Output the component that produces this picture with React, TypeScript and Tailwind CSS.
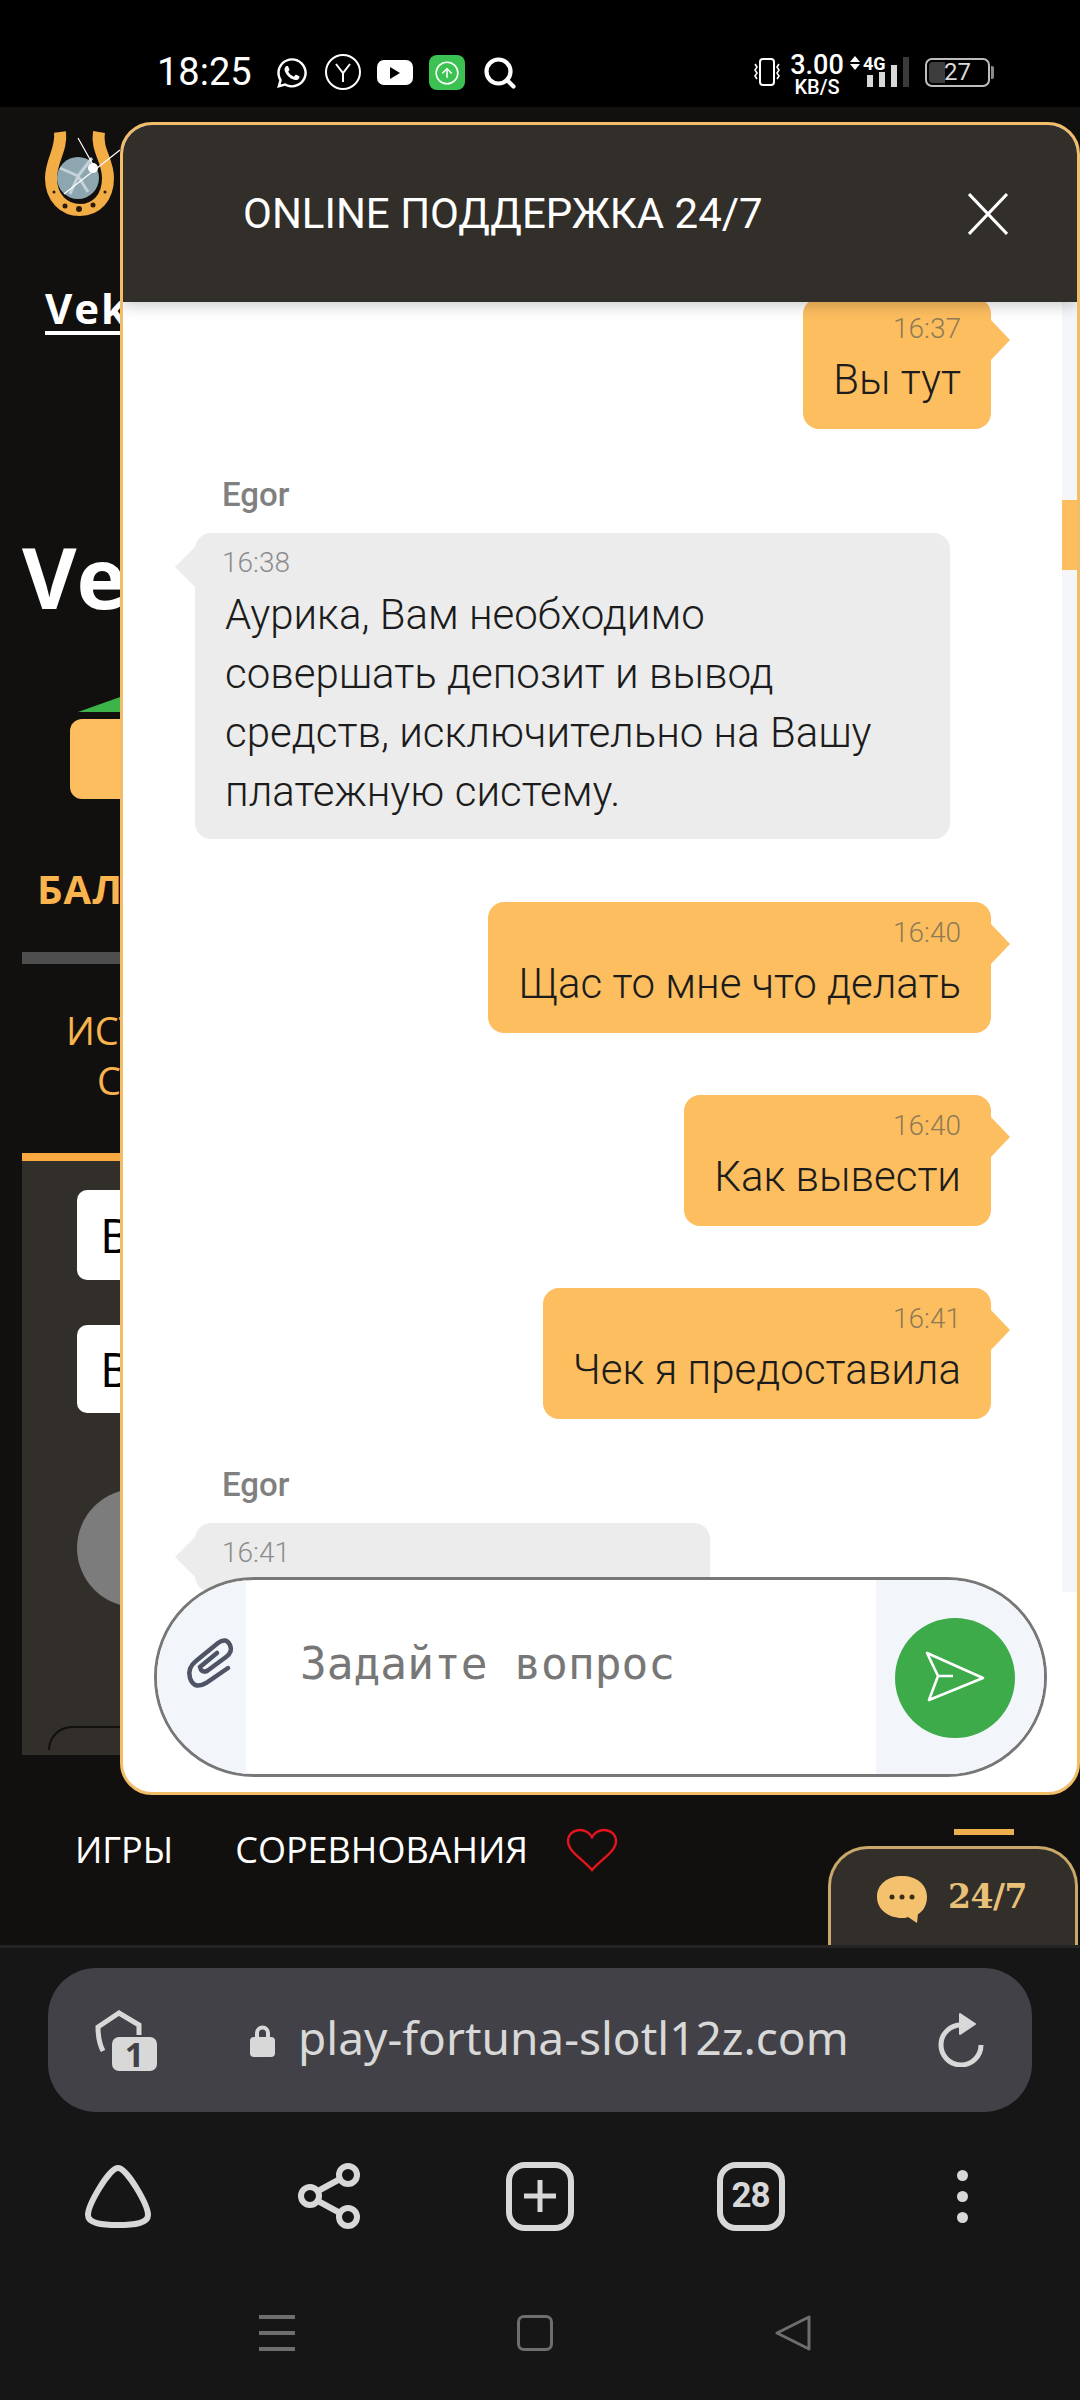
import { Search, CircleArrowUp } from 'lucide-react';
import { FaWhatsapp } from 'react-icons/fa';

function StatusBar() {
  return (
    <div className="h-[107px] bg-black flex items-start pt-[54px] text-white">
      <span className="ml-[157px] w-[118px] text-[38px] leading-[36px]">18:25</span>
      <FaWhatsapp className="mt-[2px] w-[34px] h-[34px]" />
      <div className="ml-[16px] w-[36px] h-[36px] rounded-full border-2 border-white flex items-center justify-center">
        <svg viewBox="0 0 24 24" className="w-[24px] h-[24px]" fill="none" stroke="white" strokeWidth="2">
          <path d="M5 4l7 9 7-9M12 13v9" />
        </svg>
      </div>
      <div className="ml-[16px] mt-[6px] w-[36px] h-[25px] bg-white rounded-[7px] flex items-center justify-center">
        <div className="w-0 h-0 border-y-[6px] border-y-transparent border-l-[10px] border-l-black" />
      </div>
      <div className="ml-[16px] mt-[1px] w-[36px] h-[35px] bg-[#3cc252] rounded-[8px] flex items-center justify-center">
        <CircleArrowUp className="w-[26px] h-[26px]" strokeWidth={1.4} />
      </div>
      <Search className="ml-[17px] mt-[1px] w-[36px] h-[36px]" strokeWidth={2.8} />

      <svg viewBox="0 0 30 28" className="ml-[234px] mt-[4px] w-[30px] h-[28px] shrink-0" fill="none" stroke="white">
        <rect x="8" y="1" width="14" height="26" rx="3" strokeWidth="2" />
        <path d="M3 6l2 3-2 3 2 3-2 3 2 3M27 6l-2 3 2 3-2 3 2 3-2 3" strokeWidth="1.6" />
      </svg>
      <div className="ml-[10px] w-[50px] -mt-[1px] flex flex-col items-center font-medium">
        <span className="text-[27px] leading-[24px]">3.00</span>
        <span className="text-[20px] leading-[20px]">KB/S</span>
      </div>
      <div className="ml-[8px] w-[10px] mt-[2px] flex flex-col gap-[2px] items-center">
        <div className="w-0 h-0 border-x-[5px] border-x-transparent border-b-[6px] border-b-white" />
        <div className="w-0 h-0 border-x-[5px] border-x-transparent border-t-[6px] border-t-white" />
      </div>
      <span className="ml-[3px] w-[22px] mt-[2px] text-[18px] leading-[16px] font-bold whitespace-nowrap">4G</span>
      <div className="-ml-[18px] mt-[3px] h-[30px] flex items-end gap-[6px]">
        <div className="w-[6px] h-[12px] bg-[#d8d8d8]" />
        <div className="w-[6px] h-[15px] bg-[#d8d8d8]" />
        <div className="w-[6px] h-[22px] bg-[#d8d8d8]" />
        <div className="w-[6px] h-[30px] bg-[#3a3a3a]" />
      </div>
      <div className="ml-[16px] mt-[4px] w-[65px] h-[29px] rounded-[7px] border-2 border-[#bdbdbd] p-[2px] relative flex items-center">
        <div className="w-[16px] h-full bg-[#3d3d3d] rounded-l-[4px]" />
        <span className="absolute inset-0 text-center text-[24px] leading-[25px] text-[#d8d8d8]">27</span>
      </div>
      <div className="ml-[1px] mt-[12px] w-[3px] h-[13px] bg-[#8a8a8a] rounded-r-[2px]" />
    </div>
  );
}

function Logo() {
  return (
    <svg viewBox="0 0 100 110" className="ml-[30px] mt-[13px] w-[100px] h-[110px]" fill="none">
      <path d="M30 12C32 30 21 40 21 58C21 78 34 90 50 90C66 90 78 78 78 58C78 40 66 30 69 12" stroke="#f2ad45" strokeWidth="12" />
      <circle cx="48" cy="58" r="21" fill="#8ea6b0" />
      <path d="M30 48l18 8-8 18M48 56l14-18M48 56l10 16" stroke="#c4d3d9" strokeWidth="3" />
      <path d="M34 74L90 30M48 18L66 50" stroke="#fff" strokeWidth="1.2" />
      <circle cx="63" cy="48" r="5" fill="#fff" />
      <circle cx="35" cy="86" r="2.5" fill="#2a1c08" />
      <circle cx="49" cy="89" r="3" fill="#2a1c08" />
      <circle cx="63" cy="85" r="2.5" fill="#2a1c08" />
      <circle cx="24" cy="72" r="1.5" fill="#2a1c08" />
      <circle cx="75" cy="72" r="1.5" fill="#2a1c08" />
    </svg>
  );
}

// what shows of the site behind the chat window
function SitePage() {
  return (
    <div className="flex flex-col font-['Open_Sans',sans-serif] text-white">
      <Logo />
      <span className="ml-[45px] mt-[55px] w-[300px] text-[42px] leading-[46px] font-bold tracking-[2px] border-b-4 border-white">Vek</span>
      <span className="ml-[22px] mt-[192px] text-[84px] leading-[100px] font-bold">Vek</span>
      <div className="ml-[78px] mt-[69px] w-[90px] h-[16px] bg-[#3cb44a] [clip-path:polygon(0_100%,50%_0,100%_100%)]" />
      <div className="ml-[70px] mt-[7px] w-[200px] h-[80px] bg-[#fdbe5f] rounded-[12px]" />
      <span className="ml-[37px] mt-[65px] text-[40px] leading-[50px] font-bold text-[#f9b44e] tracking-[1px]">БАЛАНС</span>
      <div className="ml-[22px] mt-[38px] h-[12px] bg-[#4e4e4e]" />
      <span className="ml-[66px] mt-[41px] text-[38px] leading-[50px] text-[#f9b44e]">ИСТОРИЯ</span>
      <span className="ml-[97px] text-[38px] leading-[50px] text-[#f9b44e]">С</span>
      <div className="ml-[22px] mt-[48px] h-[8px] bg-[#f9a93f]" />
      <div className="ml-[22px] h-[594px] bg-[#322e29] flex flex-col pl-[55px] pt-[29px]">
        <div className="h-[90px] bg-white rounded-[10px] pl-[23px] text-black text-[48px] leading-[90px]">В</div>
        <div className="mt-[45px] h-[88px] bg-white rounded-[10px] pl-[23px] text-black text-[48px] leading-[88px]">В</div>
        <div className="mt-[76px] w-[118px] h-[118px] rounded-full bg-[#7c7c7c]" />
        <div className="-ml-[29px] mt-[119px] h-[24px] rounded-t-[48px] border-2 border-b-0 border-[#12100e]" />
      </div>
      <div className="flex items-center h-[70px] mt-[60px] text-[36px] pl-[75px]">
        <span>ИГРЫ</span>
        <span className="ml-[62px]">СОРЕВНОВАНИЯ</span>
        <svg viewBox="0 0 52 44" className="ml-[38px] w-[52px] h-[44px]" fill="none" stroke="#e3141b" strokeWidth="2.4">
          <path d="M26 42C18 32 2 24 2 13C2 6 8 2 14 2C19 2 24 5 26 9C28 5 33 2 38 2C44 2 50 6 50 13C50 24 34 32 26 42Z" />
        </svg>
      </div>
    </div>
  );
}

function OwnBubble({ time, text }: { time: string; text: string }) {
  return (
    <div className="relative self-end bg-[#fdbe5f] rounded-[16px] px-[30px] pb-[20px]">
      <div className="absolute top-[22px] -right-[19px] w-0 h-0 border-y-[20px] border-y-transparent border-l-[19px] border-l-[#fdbe5f]" />
      <div className="h-[52px] pt-[10px] text-right text-[28px] leading-[42px] font-light text-[#8f7a58]">{time}</div>
      <div className="text-[42px] leading-[59px] font-light text-[#1c1c1c] whitespace-nowrap">{text}</div>
    </div>
  );
}

function AgentBubble({ time, lines, clipped }: { time: string; lines: string[]; clipped?: boolean }) {
  return (
    <div className={`relative self-start bg-[#ececec] rounded-[16px] px-[30px] ${clipped ? 'w-[515px] h-[100px]' : 'w-[755px] pb-[18px]'}`}>
      <div className="absolute top-[14px] -left-[20px] w-0 h-0 border-y-[20px] border-y-transparent border-r-[20px] border-r-[#ececec]" />
      <div className="h-[52px] pt-[9px] -ml-[3px] text-[28px] leading-[42px] font-light text-[#8c8c8c]">{time}</div>
      {lines.map((line) => (
        <div key={line} className="text-[42px] leading-[59px] font-light text-[#1c1c1c] whitespace-nowrap">{line}</div>
      ))}
    </div>
  );
}

function AgentName() {
  return <div className="ml-[27px] mt-[46px] mb-[18px] text-[33px] leading-[40px] font-medium text-[#808080]">Egor</div>;
}

function ChatInput() {
  return (
    <div className="relative z-10 -mt-[15px] mb-[15px] ml-[31px] mr-[30px] h-[200px] flex rounded-[100px] border-[3px] border-[#777] overflow-hidden bg-white">
      <div className="w-[89px] bg-[#f2f6fa] flex items-start">
        <svg viewBox="0 0 100 110" className="ml-[3px] mt-[30px] w-[100px] h-[110px] shrink-0" fill="none" stroke="#4e5366" strokeWidth="4.5" strokeLinecap="round">
          <path d="M68 58L46 73Q34 80 30 68Q27 58 36 51L58 33Q66 27 70 35Q73 42 66 47L47 61Q41 63 40 57L57 43" />
        </svg>
      </div>
      <div className="flex-1 pl-[54px] pt-[54px] font-['DejaVu_Sans_Mono',monospace] text-[44.5px] leading-[60px] text-[#777] whitespace-pre">Задайте вопрос</div>
      <div className="w-[168px] bg-[#f2f6fa] pl-[19px] pt-[38px]">
        <div className="w-[120px] h-[120px] rounded-full bg-[#3dab4a] flex items-center justify-center">
          <svg viewBox="0 0 70 60" className="w-[70px] h-[60px] ml-[1px]" fill="none" stroke="white" strokeWidth="2.6" strokeLinejoin="round">
            <path d="M6 5L62 30L8 52L17 28ZM17 28H32" />
          </svg>
        </div>
      </div>
    </div>
  );
}

function ChatWindow() {
  return (
    <div className="absolute left-[120px] top-[15px] w-[960px] h-[1673px] flex flex-col rounded-[32px] border-[3px] border-[#f1bd68] bg-white overflow-hidden">
      <div className="relative z-10 h-[177px] shrink-0 bg-[#322e29] flex items-center pl-[120px] pr-[69px] shadow-[0_4px_14px_rgba(0,0,0,0.2)]">
        <span className="flex-1 text-white text-[42px]">ONLINE ПОДДЕРЖКА 24/7</span>
        <svg viewBox="0 0 40 42" className="w-[40px] h-[42px]" stroke="white" strokeWidth="3">
          <path d="M1 1L39 41M39 1L1 41" />
        </svg>
      </div>
      <div className="h-[1290px] shrink-0 flex">
        <div className="flex-1 overflow-hidden pl-[72px] pr-[71px] flex flex-col -mt-[4px]">
          <OwnBubble time="16:37" text="Вы тут" />
          <AgentName />
          <AgentBubble time="16:38" lines={['Аурика, Вам необходимо', 'совершать депозит и вывод', 'средств, исключительно на Вашу', 'платежную систему.']} />
          <div className="mt-[63px] flex flex-col"><OwnBubble time="16:40" text="Щас то мне что делать" /></div>
          <div className="mt-[62px] flex flex-col"><OwnBubble time="16:40" text="Как вывести" /></div>
          <div className="mt-[62px] flex flex-col"><OwnBubble time="16:41" text="Чек я предоставила" /></div>
          <AgentName />
          <AgentBubble time="16:41" lines={[]} clipped />
        </div>
        <div className="w-[15px] bg-[#f4f6f9] pt-[198px]">
          <div className="h-[70px] bg-[#fdbe5f]" />
        </div>
      </div>
      <ChatInput />
    </div>
  );
}

function ChatTab() {
  return (
    <>
      <div className="absolute left-[954px] top-[1722px] w-[60px] h-[6px] bg-[#eeb04f]" />
      <div className="absolute left-[828px] top-[1739px] w-[250px] h-[99px] rounded-t-[40px] border-[3px] border-b-0 border-[#c9a86a] bg-[#322e29] flex items-start pt-[26px] pl-[45px]">
        <svg viewBox="0 0 52 50" className="w-[52px] h-[50px]">
          <path d="M26 1C40 1 51 9 51 22C51 32 45 38 42 39L41 48L32 42C30 43 28 43 26 43C12 43 1 34 1 22C1 9 12 1 26 1Z" fill="#f4c26e" />
          <circle cx="16" cy="22" r="2.5" fill="#3a2d14" />
          <circle cx="26" cy="22" r="2.5" fill="#3a2d14" />
          <circle cx="36" cy="22" r="2.5" fill="#3a2d14" />
        </svg>
        <span className="ml-[20px] mt-[3px] font-['DejaVu_Serif',serif] font-bold text-[33px] leading-[38px] tracking-[-0.5px] text-[#e8c078]">24/7</span>
      </div>
    </>
  );
}

function BrowserBar() {
  const icon = '#d8d8d8';
  return (
    <div className="h-[455px] bg-[#161616] border-t-[3px] border-[#242424] flex flex-col font-['Noto_Sans',sans-serif]">
      <div className="mx-[48px] mt-[20px] h-[144px] rounded-[48px] bg-[#414147] flex items-center pl-[47px] pr-[48px] text-[#d8d8d8]">
        <div className="relative w-[66px] h-[66px]">
          <svg viewBox="0 0 66 66" className="w-[66px] h-[66px]" fill="none" stroke={icon} strokeWidth="5">
            <path d="M8 44C4 36 3 28 3 20L24 6L44 18V28" />
          </svg>
          <div className="absolute left-[17px] top-[30px] w-[45px] h-[34px] rounded-[7px] bg-[#d8d8d8] text-[#414147] text-center text-[34px] leading-[34px] font-bold">1</div>
        </div>
        <svg viewBox="0 0 25 33" className="ml-[89px] w-[25px] h-[33px]" fill={icon}>
          <rect x="0" y="13" width="25" height="20" rx="4" />
          <path d="M5 14V9a7.500 7.500 0 0 1 15 0v5h-4V9a3.500 3.500 0 0 0-7 0v5Z" />
        </svg>
        <span className="ml-[23px] flex-1 text-[46px] leading-[60px] -mt-[6px] whitespace-nowrap">play-fortuna-slotl12z.com</span>
        <svg viewBox="0 0 46 54" className="w-[46px] h-[54px]" fill="none" stroke={icon} strokeWidth="5">
          <path d="M24 12A20 20 0 1 0 43 32" />
          <path d="M22 1L37 11L22 21Z" fill={icon} strokeWidth="2" strokeLinejoin="round" />
        </svg>
      </div>
      <div className="mt-[49px] pl-[12px] h-[70px] flex items-center">
        <div className="w-[211px] flex justify-center">
          <svg viewBox="0 0 66 63" className="w-[66px] h-[63px]" fill="none" stroke={icon} strokeWidth="6">
            <path d="M33 3C42 3 63 40 63 50C63 58 50 60 33 60C16 60 3 58 3 50C3 40 24 3 33 3Z" />
          </svg>
        </div>
        <div className="w-[211px] flex justify-center">
          <svg viewBox="0 0 62 66" className="w-[62px] h-[66px]" fill="none" stroke={icon} strokeWidth="6">
            <circle cx="50" cy="12" r="9" />
            <circle cx="12" cy="33" r="9" />
            <circle cx="50" cy="54" r="9" />
            <path d="M20 28L42 16M20 38L42 50" />
          </svg>
        </div>
        <div className="w-[211px] flex justify-center">
          <div className="w-[68px] h-[69px] rounded-[19px] border-[6px] border-[#d8d8d8] flex items-center justify-center">
            <svg viewBox="0 0 32 32" className="w-[32px] h-[32px]" stroke={icon} strokeWidth="5"><path d="M16 0V32M0 16H32" /></svg>
          </div>
        </div>
        <div className="w-[211px] flex justify-center">
          <div className="w-[68px] h-[69px] rounded-[19px] border-[6px] border-[#d8d8d8] flex items-center justify-center font-['Roboto',sans-serif] font-bold text-[#d8d8d8] text-[35px] tracking-[-1px]">28</div>
        </div>
        <div className="w-[211px] flex flex-col items-center gap-[10px] pl-[1px]">
          <div className="w-[11px] h-[11px] rounded-full bg-[#d8d8d8]" />
          <div className="w-[11px] h-[11px] rounded-full bg-[#d8d8d8]" />
          <div className="w-[11px] h-[11px] rounded-full bg-[#d8d8d8]" />
        </div>
      </div>
      <div className="mt-[84px] px-[148px] h-[36px] flex">
        <div className="w-[258px] flex justify-center">
          <div className="w-[36px] h-[36px] flex flex-col justify-between">
            <div className="h-[4px] bg-[#6e6e6e]" />
            <div className="h-[4px] bg-[#6e6e6e]" />
            <div className="h-[4px] bg-[#6e6e6e]" />
          </div>
        </div>
        <div className="w-[258px] flex justify-center">
          <div className="w-[36px] h-[36px] rounded-[7px] border-[3px] border-[#6e6e6e]" />
        </div>
        <div className="w-[258px] flex justify-center">
          <svg viewBox="0 0 36 36" className="w-[36px] h-[36px]" fill="none" stroke="#6e6e6e" strokeWidth="3" strokeLinejoin="round">
            <path d="M34 2V34L2 18Z" />
          </svg>
        </div>
      </div>
    </div>
  );
}

export default function App() {
  return (
    <div className="w-[1080px] h-[2400px] overflow-hidden flex flex-col bg-[#12100e] font-['Roboto',sans-serif]">
      <StatusBar />
      <div className="relative h-[1838px] shrink-0 overflow-hidden">
        <SitePage />
        <ChatTab />
        <ChatWindow />
      </div>
      <BrowserBar />
    </div>
  );
}
